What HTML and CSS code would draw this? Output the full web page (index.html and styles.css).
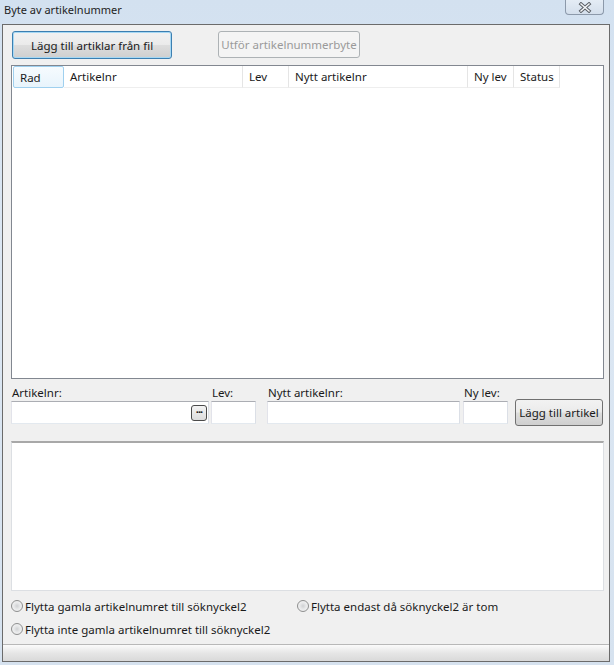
FILE: index.html
```html
<!DOCTYPE html>
<html lang="sv">
<head>
  <meta charset="UTF-8">
  <title>Byte av artikelnummer</title>
  <link rel="stylesheet" href="styles.css">
</head>
<body>
  <div class="window">
    <div class="titlebar">
      <span class="title">Byte av artikelnummer</span>
      <div class="close">
        <svg width="16" height="11" viewBox="0 0 16 11">
          <path d="M4 2 L12 9 M12 2 L4 9" stroke="#5a5f66" stroke-width="3.4" stroke-linecap="square"/>
          <path d="M4 2 L12 9 M12 2 L4 9" stroke="#f4f6f8" stroke-width="1.5" stroke-linecap="square"/>
        </svg>
      </div>
    </div>
    <div class="client">
      <div class="toolbar">
        <button class="btn btn-focus">Lägg till artiklar från fil</button>
        <button class="btn btn-disabled">Utför artikelnummerbyte</button>
      </div>

      <div class="listview">
        <div class="lv-header">
          <div class="col col-rad">Rad</div>
          <div class="col col-art">Artikelnr</div>
          <div class="col col-lev">Lev</div>
          <div class="col col-nytt">Nytt artikelnr</div>
          <div class="col col-nylev">Ny lev</div>
          <div class="col col-status">Status</div>
        </div>
      </div>

      <div class="fields">
        <label>Artikelnr:</label>
        <label>Lev:</label>
        <label>Nytt artikelnr:</label>
        <label>Ny lev:</label>
        <span></span>
        <div class="input in-art"><span class="dots">···</span></div>
        <div class="input in-short"></div>
        <div class="input in-nytt"></div>
        <div class="input in-short"></div>
        <button class="btn btn-add">Lägg till artikel</button>
      </div>

      <div class="memo"></div>

      <div class="options">
        <div class="opt-row">
          <label class="radio opt-wide"><span class="dot"></span>Flytta gamla artikelnumret till söknyckel2</label>
          <label class="radio"><span class="dot"></span>Flytta endast då söknyckel2 är tom</label>
        </div>
        <div class="opt-row">
          <label class="radio"><span class="dot"></span>Flytta inte gamla artikelnumret till söknyckel2</label>
        </div>
      </div>

      <div class="statusbar"></div>
    </div>
  </div>
</body>
</html>
```

FILE: styles.css
```css
* {
  box-sizing: border-box;
}
body {
  margin: 0;
  font-family: 'Noto Sans', sans-serif;
  font-size: 11.5px;
  color: #1a1a1a;
}
.window {
  width: 614px;
  height: 665px;
  padding: 0 4px 3px 2px;
  display: flex;
  flex-direction: column;
  background: linear-gradient(to bottom, #d3e1f0, #dce7f3 40%, #d6e2ef);
}
.titlebar {
  height: 24px;
  display: flex;
  align-items: flex-start;
  justify-content: space-between;
}
.title {
  margin: 2px 0 0 2px;
  font-size: 11px;
  color: #1e1e1e;
}
.close {
  width: 39px;
  height: 15px;
  margin-right: 6px;
  border: 1px solid #8c99aa;
  border-top: none;
  border-radius: 0 0 4px 4px;
  background: linear-gradient(to bottom, #e4ecf5, #d4dfec);
  display: flex;
  justify-content: center;
  align-items: center;
}
.client {
  flex: 1;
  border: 1px solid #6b6b6b;
  background: #f0f0f0;
  padding: 6px 5px 0 8px;
  display: flex;
  flex-direction: column;
}
.toolbar {
  display: flex;
  align-items: flex-start;
  gap: 46px;
  padding-left: 1px;
  height: 34px;
}
.btn {
  font-family: inherit;
  font-size: 11.5px;
  color: #1a1a1a;
  border: 1px solid #707070;
  border-radius: 3px;
  background: linear-gradient(to bottom, #f2f2f2, #ebebeb 48%, #dddddd 52%, #cfcfcf);
  padding: 0;
}
.btn-focus {
  width: 160px;
  height: 28px;
  border-color: #3c7fb1;
  box-shadow: inset 0 0 0 1px #a6d8f4;
}
.btn-disabled {
  width: 142px;
  height: 27px;
  color: #9a9a9a;
  border-color: #adb2b5;
  background: #f4f4f4;
}
.listview {
  height: 314px;
  border: 1px solid #828790;
  background: #fff;
}
.lv-header {
  display: flex;
  height: 23px;
  padding-left: 1px;
}
.col {
  height: 22px;
  line-height: 21px;
  padding-left: 6px;
  border-right: 1px solid #e5e5e5;
  border-bottom: 1px solid #eeeeee;
}
.col-rad {
  width: 51px;
  border: 1px solid #9fd0ef;
  border-radius: 2px;
  background: linear-gradient(to bottom, #f6fbfe, #e8f4fc);
}
.col-art { width: 179px; }
.col-lev { width: 46px; }
.col-nytt { width: 179px; }
.col-nylev { width: 46px; }
.col-status { width: 46px; }
.fields {
  margin-top: 6px;
  display: grid;
  grid-template-columns: 200px 56px 196px 52px 88px;
  grid-template-rows: 14px 27px;
  align-items: center;
}
.fields label {
  padding-left: 1px;
  align-self: start;
  line-height: 16px;
}
.input {
  height: 23px;
  background: #fff;
  border: 1px solid #e3e9ef;
  border-top-color: #abadb3;
  border-left-color: #e2e3ea;
  border-right-color: #dbdfe6;
}
.in-art {
  width: 198px;
  display: flex;
  justify-content: flex-end;
  align-items: center;
  padding-right: 1px;
}
.in-short {
  width: 45px;
}
.in-nytt {
  width: 193px;
}
.fields .btn-add {
  height: 27px;
  width: 88px;
}
.dots {
  width: 16px;
  height: 16px;
  border: 1px solid #4a4a4a;
  border-radius: 3px;
  background: linear-gradient(to bottom, #f4f4f4, #dcdcdc);
  font-size: 11px;
  font-weight: bold;
  line-height: 12px;
  text-align: center;
  letter-spacing: -1px;
}
.memo {
  margin-top: 15px;
  height: 150px;
  background: #fff;
  border: 1px solid #dcdfe3;
  border-top: 2px solid #a8a8a8;
}
.options {
  margin-top: 7px;
  display: flex;
  flex-direction: column;
  gap: 7px;
}
.opt-row {
  display: flex;
  height: 16px;
  align-items: center;
}
.radio {
  display: flex;
  align-items: center;
  gap: 2px;
}
.opt-wide {
  width: 286px;
}
.dot {
  width: 12px;
  height: 12px;
  border-radius: 50%;
  border: 1px solid #8e8f8f;
  background: radial-gradient(circle at 50% 50%, #cfd1d3 0, #e8e9ea 45%, #f6f6f6 100%);
}
.statusbar {
  margin: auto -5px 0 -8px;
  height: 17px;
  border-top: 1px solid #b8b8b8;
  background: linear-gradient(to bottom, #fbfbfb, #e6e6e6 50%, #d9d9d9);
}
```
